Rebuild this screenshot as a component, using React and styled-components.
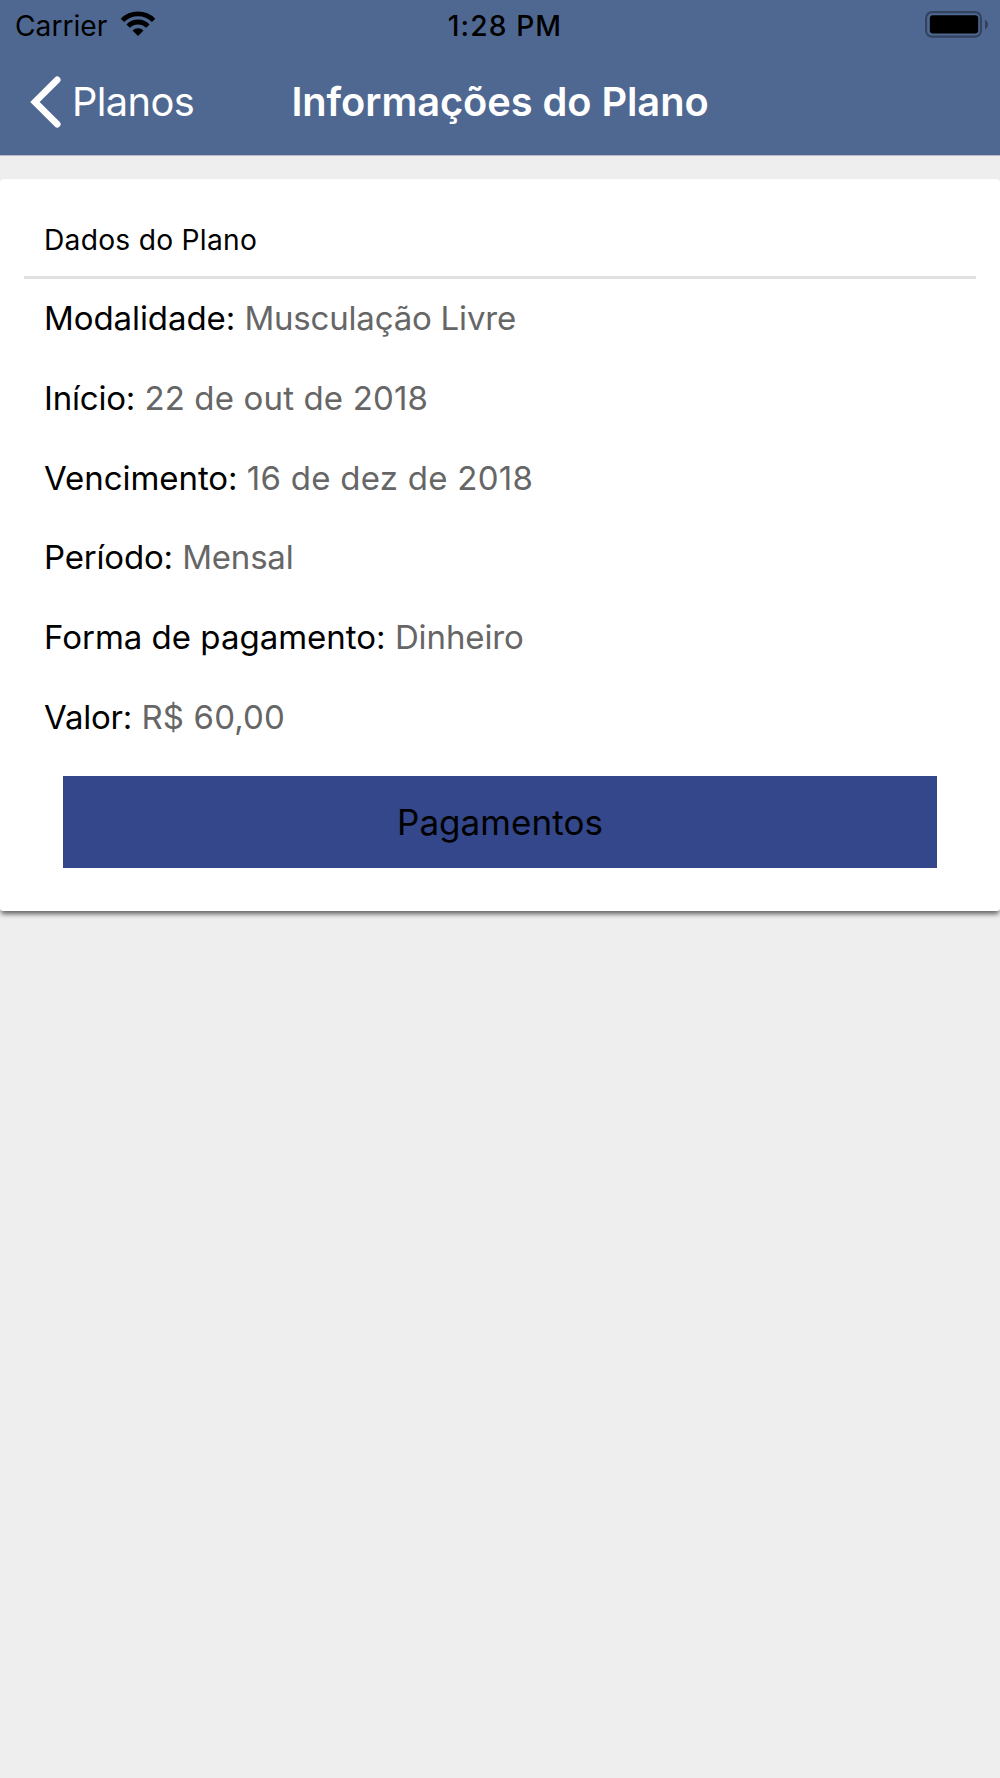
import React from 'react';
import styled, { createGlobalStyle } from 'styled-components';

const planInfo = [
  { label: 'Modalidade:', value: 'Musculação Livre', labelSpacing: -0.08, valueSpacing: -0.2 },
  { label: 'Início:', value: '22 de out de 2018', labelSpacing: -0.2, valueSpacing: 0.15 },
  { label: 'Vencimento:', value: '16 de dez de 2018', labelSpacing: -0.05, valueSpacing: 0.26 },
  { label: 'Período:', value: 'Mensal', labelSpacing: -0.18, valueSpacing: -0.2 },
  { label: 'Forma de pagamento:', value: 'Dinheiro', valueSpacing: -0.1 },
  { label: 'Valor:', value: 'R$ 60,00', labelSpacing: -0.2, valueSpacing: 0.14 },
];

const WifiIcon = () => (
  <svg width='36' height='26' viewBox='0 0 36 26'>
    <g fill='none' stroke='#000' strokeWidth='4.8'>
      <path d='M2.4 9.4a22.1 22.1 0 0 1 31.2 0' />
      <path d='M8.1 15.1a14 14 0 0 1 19.8 0' />
    </g>
    <path d='M18 25l-5.5-5.5a7.8 7.8 0 0 1 11 0z' />
  </svg>
);

const BatteryIcon = () => (
  <svg width='64' height='27' viewBox='0 0 64 27'>
    <rect x='1.1' y='1.1' width='54.8' height='24.6' rx='6' fill='none' stroke='#33435f' strokeWidth='2.2' />
    <rect x='4.8' y='4.2' width='48.4' height='18.4' rx='3' />
    <path d='M60 8.6c4 2 4 8 0 10z' fill='#33435f' />
  </svg>
);

const BackIcon = () => (
  <svg width='32' height='52' viewBox='0 0 32 52'>
    <path
      d='M27.2 3.8L5 26L27.2 48.2'
      fill='none'
      stroke='#fff'
      strokeWidth='6.7'
      strokeLinecap='round'
    />
  </svg>
);

const App = () => {
  return (
    <Screen>
      <GlobalStyle />
      <Header>
        <StatusBar>
          <Carrier>
            <span>Carrier</span>
            <WifiIcon />
          </Carrier>
          <Clock>1:28 PM</Clock>
          <Battery>
            <BatteryIcon />
          </Battery>
        </StatusBar>
        <NavBar>
          <BackButton>
            <BackIcon />
            <span>Planos</span>
          </BackButton>
          <NavTitle>Informações do Plano</NavTitle>
        </NavBar>
      </Header>
      <Card>
        <CardTitle>Dados do Plano</CardTitle>
        <InfoList>
          {planInfo.map((item) => (
            <InfoRow key={item.label}>
              <Label $spacing={item.labelSpacing}>{item.label}</Label>{' '}
              <Value $spacing={item.valueSpacing}>{item.value}</Value>
            </InfoRow>
          ))}
        </InfoList>
        <PaymentsButton>Pagamentos</PaymentsButton>
      </Card>
    </Screen>
  );
};

export default App;

const GlobalStyle = createGlobalStyle`
  * {
    box-sizing: border-box;
  }

  body {
    margin: 0;
    background: #eee;
  }

  svg {
    display: block;
    flex-shrink: 0;
  }
`;

const Screen = styled.div`
  display: flow-root;
  min-height: 100vh;
  background: #eee;
  color: #000;
  font-family: Inter, 'Liberation Sans', sans-serif;
`;

const Header = styled.header`
  height: 156px;
  background: #4f6891;
  border-bottom: 1px solid #b9bac6;
`;

const StatusBar = styled.div`
  display: grid;
  grid-template-columns: 1fr auto 1fr;
  align-items: center;
  height: 48px;
  padding: 3px 11px 0 15px;
  font-size: 28.2px;
  line-height: 34px;
`;

const Carrier = styled.div`
  display: flex;
  align-items: center;
  gap: 12.6px;

  > svg {
    margin-top: -3px;
  }
`;

const Clock = styled.div`
  padding-left: 6px;
  font-weight: 500;
  letter-spacing: 1.1px;
`;

const Battery = styled.div`
  display: flex;
  justify-content: flex-end;
  margin-top: -3px;
`;

const NavBar = styled.nav`
  display: grid;
  grid-template-columns: 1fr auto 1fr;
  align-items: center;
  height: 107px;
  padding: 0 30px;
  font-size: 39.8px;
  color: #fff;
`;

const BackButton = styled.div`
  display: flex;
  align-items: center;
  gap: 10px;
  letter-spacing: -0.6px;
`;

const NavTitle = styled.h1`
  margin: 0;
  font-size: inherit;
  font-weight: 600;
  letter-spacing: -0.06px;
`;

const Card = styled.section`
  height: 732.8px;
  margin-top: 22.7px;
  padding: 24px 24px 0;
  background: #fff;
  border-radius: 4px 4px 3px 3px;
  box-shadow: 0 4px 5px -1px rgba(0, 0, 0, 0.6);
`;

const CardTitle = styled.h2`
  height: 76.3px;
  margin: 0;
  padding-left: 20px;
  border-bottom: 3px solid #e1e1e1;
  font-size: 28.2px;
  font-weight: 400;
  line-height: 75px;
  letter-spacing: 0.26px;
`;

const InfoList = styled.div`
  padding: 0.2px 0 0 20px;
  font-size: 33px;
`;

const InfoRow = styled.div`
  height: 79.7px;
  line-height: 79.7px;
`;

const Label = styled.span`
  letter-spacing: ${({ $spacing = 0 }) => $spacing}px;
`;

const Value = styled.span`
  color: #666;
  letter-spacing: ${({ $spacing = 0 }) => $spacing}px;
`;

const PaymentsButton = styled.button`
  display: block;
  width: 874px;
  height: 92px;
  margin: 18.7px auto 0;
  padding: 0;
  border: 0;
  background: #34478b;
  color: #000;
  font-family: inherit;
  font-size: 35px;
  letter-spacing: 0.06px;
`;
